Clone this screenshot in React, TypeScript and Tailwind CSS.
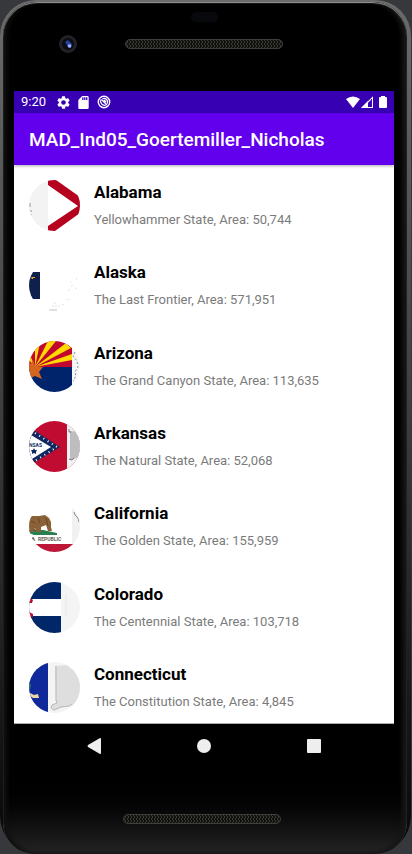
import type { ReactNode } from "react";

type StateRow = { name: string; nickname: string; area: string; flag: ReactNode };

const states: StateRow[] = [
  {
    name: "Alabama",
    nickname: "Yellowhammer State",
    area: "50,744",
    flag: (
      <>
        <rect width="51" height="51" fill="#fff" />
        <rect width="19" height="51" fill="#f3f3f3" />
        <path d="M19 0h8L51 17v16L26 51h-7v-5L49 26 19 5z" fill="#b4021f" />
        <path d="M1 23v4M2 30v2M2 34v1" stroke="#999" />
      </>
    ),
  },
  {
    name: "Alaska",
    nickname: "The Last Frontier",
    area: "571,951",
    flag: (
      <>
        <rect width="51" height="51" fill="#fff" />
        <rect y="12" width="11" height="27" fill="#10204d" />
        <path d="M2 17h4v1H4v1H3z" fill="#e6a623" />
        <path d="M41 21l2 2m4-5l1 2m-6 6l2-1m-5 5h2m5-2l2 1M37 40l4-1M23 46h9m3-2l-3 1m-7-2h3" stroke="#e2e2e2" strokeDasharray="2 1" />
        <path d="M20 50h8" stroke="#bbb" />
      </>
    ),
  },
  {
    name: "Arizona",
    nickname: "The Grand Canyon State",
    area: "113,635",
    flag: (
      <>
        <rect width="51" height="51" fill="#f6f6f6" />
        <rect width="43" height="26" fill="#c2072f" />
        <rect y="26" width="43" height="25" fill="#00246b" />
        <path d="M6 26L0 19v-8zM6 26L6 5l5-3zM6 26L19 0h8zM6 26L37 2l5 5zM6 26L43 13v6z" fill="#ffd900" />
        <path d="M4 19l2 6 8 1-4 5 3 7-7-3-6 3V21l2 2z" fill="#d4661f" />
        <path d="M46 11l-2 4 4 5 1 6-3 5 1 4-3 5" fill="none" stroke="#888" strokeDasharray="2 2" />
      </>
    ),
  },
  {
    name: "Arkansas",
    nickname: "The Natural State",
    area: "52,068",
    flag: (
      <>
        <rect width="51" height="51" fill="#c00c31" />
        <path d="M3 8L31 26 3 43l-3-3V10z" fill="#10285f" />
        <path d="M2 14L22 26 3 38l-3-3V15z" fill="#fff" />
        <path d="M6 12L28 26 6 40" fill="none" stroke="#fff" strokeWidth="2" strokeDasharray="1 4" />
        <text x="0" y="26" fontSize="5" fontWeight="700" fill="#10285f" className="font-[Roboto,sans-serif]">NSAS</text>
        <path d="M5 27l1 2h2l-1 2v2l-2-1-2 1v-2l-1-2h2z" fill="#10285f" />
        <rect x="38" width="13" height="51" fill="#f1f1f1" />
        <path d="M41 10l10 1v24l-8 4-2-1z" fill="#bdbdbd" />
        <path d="M40 8v3h2M40 38l3 1 2-2" stroke="#777" fill="none" />
      </>
    ),
  },
  {
    name: "California",
    nickname: "The Golden State",
    area: "155,959",
    flag: (
      <>
        <rect width="51" height="51" fill="#fff" />
        <rect x="43" width="8" height="43" fill="#f1f1f1" />
        <path d="M45 11l1 3 3 3 1 4" stroke="#888" fill="none" />
        <path d="M0 29h14l14 3v2H5l-5-2z" fill="#28804f" />
        <path d="M0 18l3-3 7 0 6-1 4 3 2 4v5l1 4h-4l-2-6-5 2v5H7l-1-4-2 4H0z" fill="#8b6238" />
        <path d="M2 20l4 2M9 17l2 5m6-5l2 8M5 28l2 2" stroke="#6b4526" />
        <text x="2" y="40" fontSize="6" fontWeight="700" fill="#665f51" className="font-[Roboto,sans-serif]">A</text>
        <text x="9" y="40" fontSize="5" fontWeight="700" fill="#665f51" className="font-[Roboto,sans-serif]">REPUBLIC</text>
        <rect y="43" width="51" height="8" fill="#bd1637" />
      </>
    ),
  },
  {
    name: "Colorado",
    nickname: "The Centennial State",
    area: "103,718",
    flag: (
      <>
        <rect width="51" height="51" fill="#f4f4f4" />
        <rect width="32" height="51" fill="#002868" />
        <rect y="17" width="32" height="17" fill="#fff" />
        <path d="M0 15l4 3-1 3H0zM0 30l4 2v3H0z" fill="#bf0a30" />
        <path d="M37 12v22" stroke="#e7e7e7" />
      </>
    ),
  },
  {
    name: "Connecticut",
    nickname: "The Constitution State",
    area: "4,845",
    flag: (
      <>
        <rect width="51" height="51" fill="#f4f4f4" />
        <rect width="19" height="51" fill="#10299a" />
        <path d="M0 19l2 4-1 4H0z" fill="#2f7a62" />
        <path d="M1 31l4 2 4-1 1 4H4l-3-2z" fill="#ead9a4" />
        <path d="M26 4l13-1h3l10 2v38l-11 1-10 2-6 3-3-3 1-3 4-1z" fill="#dedede" />
        <path d="M27 4v34l1 3-5 2-1 3 3 2 7-3 8-1 3-2" fill="none" stroke="#b9b9b9" />
      </>
    ),
  },
];

function SpeakerGrille() {
  return (
    <div className="h-[10px] w-[158px] overflow-hidden rounded-full border border-[#3f3e3b] bg-[#11110f]">
      <svg className="block h-full w-full" aria-hidden="true">
        <defs>
          <pattern id="mesh" width="3" height="4" patternUnits="userSpaceOnUse">
            <path d="M0 0l2 2-2 2" stroke="#3b3933" fill="none" />
          </pattern>
        </defs>
        <rect width="100%" height="100%" fill="url(#mesh)" />
      </svg>
    </div>
  );
}

function TopBezel() {
  return (
    <div className="flex h-[89px] flex-col">
      <div className="flex justify-center pt-[10px]">
        <div className="h-[10px] w-[27px] rounded-full bg-[#08090d]" />
      </div>
      <div className="flex items-center pt-[12px] pl-[44px]">
        <svg width="20" height="20" viewBox="0 0 20 20" aria-hidden="true">
          <circle cx="10" cy="10" r="9" fill="#222224" />
          <circle cx="10" cy="10" r="6" fill="#0b0c13" />
          <path d="M7 8l3-2 4 4-1 4-3-1z" fill="#26439a" />
          <circle cx="11.5" cy="12" r="1.8" fill="#9fb4ff" />
        </svg>
        <div className="pl-[47px]">
          <SpeakerGrille />
        </div>
      </div>
    </div>
  );
}

function StatusBar() {
  return (
    <div className="flex h-[22px] items-center bg-[#3700b3] px-[7px] text-white">
      <span className="w-[36px] text-[13px] leading-[22px]">9:20</span>
      <div className="flex flex-1 items-center gap-[7px]">
        <svg width="13" height="13" viewBox="2 2 20 20" fill="currentColor" aria-hidden="true">
          <path d="M19.14 12.94c.04-.3.06-.61.06-.94s-.02-.64-.07-.94l2.03-1.58a.49.49 0 0 0 .12-.61l-1.92-3.32a.49.49 0 0 0-.59-.22l-2.39.96a7 7 0 0 0-1.62-.94l-.36-2.54a.48.48 0 0 0-.48-.41h-3.84a.47.47 0 0 0-.47.41l-.36 2.54c-.59.24-1.13.57-1.62.94l-2.39-.96a.48.48 0 0 0-.59.22L2.74 8.87a.48.48 0 0 0 .12.61l2.03 1.58a6 6 0 0 0 0 1.88l-2.03 1.58a.49.49 0 0 0-.12.61l1.92 3.32c.12.22.37.29.59.22l2.39-.96c.5.38 1.03.7 1.62.94l.36 2.54c.05.24.24.41.48.41h3.84c.24 0 .44-.17.47-.41l.36-2.54a7 7 0 0 0 1.62-.94l2.39.96c.22.08.47 0 .59-.22l1.92-3.32a.47.47 0 0 0-.12-.61zM12 15.6a3.600 3.600 0 1 1 0-7.200 3.600 3.600 0 0 1 0 7.200z" />
        </svg>
        <svg width="13" height="13" viewBox="2 2 20 20" fill="currentColor" aria-hidden="true">
          <path d="M18 2h-8L4 8v12c0 1.100.9 2 2 2h12c1.100 0 2-.9 2-2V4c0-1.100-.9-2-2-2zm-6 6h-2V4h2zm3 0h-2V4h2zm3 0h-2V4h2z" />
        </svg>
        <svg width="14" height="14" viewBox="0 0 14 14" fill="none" stroke="currentColor" aria-hidden="true">
          <circle cx="7" cy="7" r="5.700" strokeWidth="1.400" />
          <path d="M4 4.500a4 4 0 0 0 5 5.500M5.500 3.700a3.500 3.500 0 0 1 4.500 5" strokeWidth="1.200" />
          <path d="M4.500 4.500l5.500 5.500M7 5l2 2" strokeWidth="1.400" />
        </svg>
      </div>
      <svg width="14" height="12" viewBox="0 0 14 12" fill="currentColor" aria-hidden="true">
        <path d="M0 3Q7-2 14 3L7 12z" />
      </svg>
      <svg className="ml-px" width="12" height="12" viewBox="0 0 12 12" fill="none" stroke="currentColor" aria-hidden="true">
        <path d="M1.500 11.500h10v-10z" strokeWidth="1.100" />
        <path d="M0 12L7 5v7z" fill="currentColor" stroke="none" />
      </svg>
      <svg className="ml-[6px]" width="8" height="12" viewBox="0 0 8 12" fill="currentColor" aria-hidden="true">
        <path d="M2 0h4v1h1q1 0 1 1v9q0 1-1 1H1q-1 0-1-1V2q0-1 1-1h1z" />
      </svg>
    </div>
  );
}

function StateItem({ state }: { state: StateRow }) {
  return (
    <li className="flex items-center gap-[14px] px-[15px]">
      <svg className="size-[51px] shrink-0 rounded-full" viewBox="0 0 51 51" aria-hidden="true">
        {state.flag}
      </svg>
      <div className="min-w-0 pb-[2px]">
        <h2 className="text-[17px] leading-[24px] font-bold text-black">{state.name}</h2>
        <p className="pt-[7px] text-[13px] leading-[18px] text-[#7b7b7b]">
          {state.nickname}, Area: {state.area}
        </p>
      </div>
    </li>
  );
}

function NavigationBar() {
  return (
    <nav className="flex h-[44px] items-center justify-between px-[70px] text-[#eeeeee]">
      <button aria-label="Back" className="flex size-5 items-center justify-center">
        <svg width="14" height="16" viewBox="0 0 14 16" fill="currentColor" aria-hidden="true">
          <path d="M13 0q1 0 1 1v14q0 1-1 1L1 9Q0 8 1 7z" />
        </svg>
      </button>
      <button aria-label="Home" className="flex size-5 items-center justify-center">
        <span className="size-[14px] rounded-full bg-[#eeeeee]" />
      </button>
      <button aria-label="Overview" className="flex size-5 items-center justify-center">
        <span className="size-[14px] rounded-[1px] bg-[#eeeeee]" />
      </button>
    </nav>
  );
}

export default function App() {
  return (
    <div className="h-screen min-h-[854px] overflow-hidden bg-[#37383b] pr-px font-[Roboto,sans-serif]">
      <div className="flex h-full flex-col rounded-t-[36px] rounded-b-[38px] bg-linear-to-b from-[#6c6c6c] via-[#3c3c3c] to-[#08080a] pt-[2px] pr-[4px] pl-[3px]">
        <div className="flex flex-1 flex-col rounded-t-[34px] rounded-b-[32px] bg-linear-to-b from-black from-90% to-[#242424] pr-[13px] pl-[11px] shadow-[inset_0_1px_1px_#999999,inset_-5px_0_4px_#161616,inset_4px_0_4px_#101010]">
          <TopBezel />
          <div className="flex flex-col">
            <StatusBar />
            <header className="z-10 flex h-[52px] items-center bg-[#6200ee] px-[15px] pt-[2px] shadow-[0_1px_3px_#00000055]">
              <h1 className="text-[19px] leading-[26px] font-medium whitespace-nowrap text-white">
                MAD_Ind05_Goertemiller_Nicholas
              </h1>
            </header>
            <main className="h-[559px] overflow-hidden border-b border-[#aaaaaa] bg-white">
              <ul className="grid h-[563px] auto-rows-fr">
                {states.map((state) => (
                  <StateItem key={state.name} state={state} />
                ))}
              </ul>
            </main>
            <NavigationBar />
          </div>
          <div className="flex justify-center pt-[46px] pr-[5px]">
            <SpeakerGrille />
          </div>
        </div>
      </div>
    </div>
  );
}
